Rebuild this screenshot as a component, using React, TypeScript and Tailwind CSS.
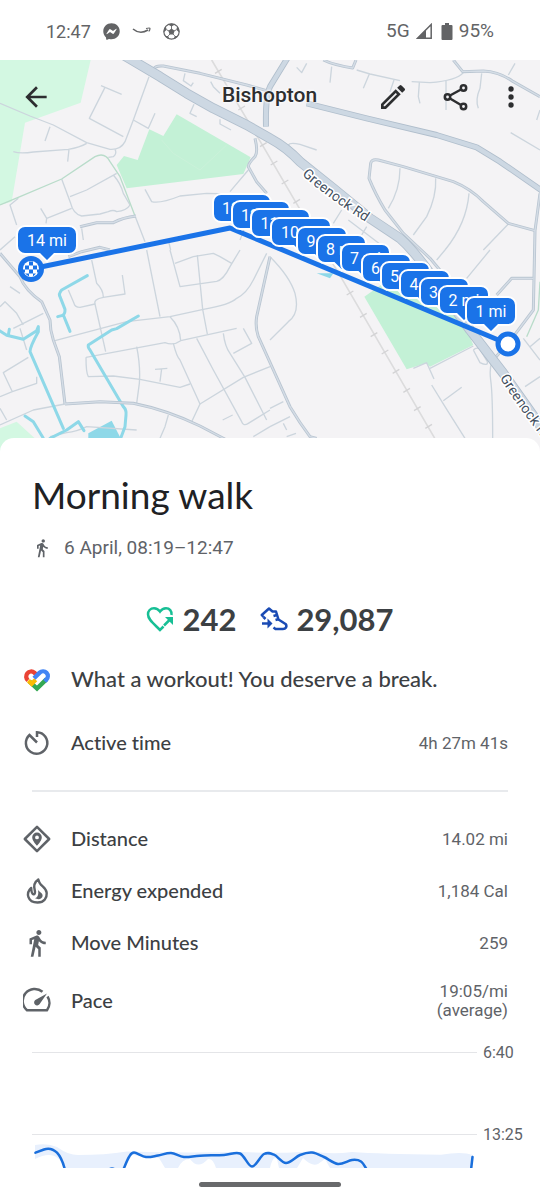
import type { ReactNode } from "react";
import { MdArrowBack, MdDirectionsWalk, MdOutlineModeEdit } from "react-icons/md";
import { FaFacebookMessenger } from "react-icons/fa";

// left/top of every mile label, the last one is drawn on top
const mileLabels = [
  { text: "14 mi", x: 18, y: 167, w: 58 },
  { text: "13 mi", x: 214, y: 135, w: 56 },
  { text: "12 mi", x: 233, y: 142, w: 56 },
  { text: "11 mi", x: 252, y: 150, w: 57 },
  { text: "10 mi", x: 272, y: 159, w: 58 },
  { text: "9 mi", x: 298, y: 168, w: 48 },
  { text: "8 mi", x: 318, y: 176, w: 47 },
  { text: "7 mi", x: 342, y: 185, w: 47 },
  { text: "6 mi", x: 363, y: 195, w: 47 },
  { text: "5 mi", x: 382, y: 203, w: 47 },
  { text: "4 mi", x: 401, y: 211, w: 48 },
  { text: "3 mi", x: 421, y: 219, w: 47 },
  { text: "2 mi", x: 440, y: 227, w: 48 },
  { text: "1 mi", x: 467, y: 238, w: 48 },
];

const lanes = [
  "M303 77L365 103M315 82L268 175L370 230",
  "M447 50L400 180L375 245Q362 270 330 268L260 248L160 195L90 168L0 130",
  "M400 180L445 205L465 160M150 200L135 243M40 275Q60 282 100 276L205 268Q240 262 260 250M207 268L203 305",
  "M345 268Q352 280 340 290L325 292M185 357L212 430Q220 462 245 468L300 462L325 455Q340 448 350 455Q380 452 390 435",
  "M210 410L260 390L350 340M340 345Q362 370 370 400L390 435M50 495L30 435L55 415M122 445L140 475L215 445M140 475L138 490",
  "M0 570L45 530M245 505L250 540M405 468L435 545M435 388L455 425Q480 432 540 408L620 400L690 402",
  "M555 40L550 62L573 78L580 68M582 133L570 160L590 170M660 178L660 192L693 210M632 65L640 80L660 100",
  "M690 395L745 330M1070 30L1110 42L1200 62M995 20L990 68M1108 42L1090 85M1182 60L1170 95M890 22L905 38L920 10",
  "M1235 65L1290 68Q1370 62 1390 38M1258 68L1255 110L1260 130M1338 60L1338 150M1445 40L1440 85Q1425 120 1435 145",
  "M1545 10L1525 45M1620 150L1610 180M1532 218L1620 270M865 255Q870 246 900 253L950 270M1025 450L1000 490M1045 480L1170 575M1100 500L1085 525",
  "M1200 325Q1200 390 1165 445M1307 355Q1310 410 1280 470L1240 525M1407 400Q1400 490 1335 570M1525 492L1450 570",
  "M440 570L480 770M510 570L540 680L650 664Q670 660 690 620L720 570M525 610L580 590L640 580L660 590L695 610M592 585L608 748L622 822",
  "M165 842L380 785L510 770L610 748Q690 735 710 715Q740 700 760 660L800 580M505 540L512 570M720 540L735 500",
  "M275 600L290 670Q310 690 310 712L375 702L367 645M310 712Q280 718 285 732L240 742Q225 742 222 730L205 690M285 732L317 875",
  "M510 770Q540 800 542 842M258 892L495 848Q520 858 542 842L710 805M258 892Q258 940 265 950L340 948L420 958L540 982L570 972",
  "M410 860Q422 920 418 970L410 1030M590 835L640 930L725 1085Q730 1100 745 1090L810 1050M520 850Q530 890 540 900L600 1032L575 1085",
  "M600 1032L730 952L810 920M670 820Q675 860 690 880L735 952L800 1080M730 805L755 850L700 880M465 928L502 925M485 926L480 965",
  "M668 1080L698 1065M505 1065L495 1100L480 1135M760 1130L810 1100M0 740L15 725L50 760L70 795M40 805L130 760",
  "M60 805L80 870M85 892L10 938L37 995L110 970V950M0 1010L37 995M0 1095L100 1050L195 1032M0 1045L20 1080M150 1130L200 1118Q230 1115 260 1100L410 1110",
  "M30 680L60 700M810 590Q870 650 885 700Q900 760 865 785L810 840M810 1045L850 1025M810 1100L870 1070M850 1090L860 1110M860 1130L888 1120",
  "M1240 925L1280 908L1302 957M1295 975L1335 1040L1395 1135M1330 1022L1385 982M1290 925L1420 858M1420 870L1440 908Q1465 920 1462 905L1440 868Q1430 860 1420 870",
  "M1490 890Q1465 905 1472 960Q1478 1000 1478 1135M1570 835L1620 900M1575 980L1620 950M1590 860L1620 835M1400 655L1470 570M1335 570L1310 600",
];

const streets = [
  "M460 28Q465 16 490 18L600 40L740 75L800 92",
  "M970 0Q1000 15 1058 24L1068 0",
  "M1360 0L1388 35L1450 33Q1500 36 1540 65L1620 110",
  "M1605 512L1525 490L1450 425Q1410 385 1360 365L1210 320L1135 300Q1115 296 1112 310L1107 355Q1125 400 1155 450L1210 520L1290 595L1370 690",
  "M1620 400L1605 512L1600 750L1540 830L1480 900",
  "M1490 705L1535 655H1600",
  "M765 235Q775 275 765 290Q745 310 745 320L770 365L800 400",
  "M240 500L290 488L340 488Q370 472 408 468",
  "M0 580L60 650Q75 690 125 725L150 780Q150 810 160 840L178 890L195 1032",
  "M195 1032L300 1025L400 1030Q500 1050 600 1098L680 1140",
  "M810 590L770 770Q765 800 775 830L870 1040Q900 1090 930 1130L950 1135",
  "M205 590L245 575L300 562L330 570",
];

const greenockRd = "M370 -15L480 50L560 100L640 145L740 195L810 235Q860 262 900 305L1000 385L1110 475L1200 535Q1240 570 1290 640L1410 810L1510 940L1630 1110";
const highRd = "M920 130L1100 175L1310 225L1430 262L1500 305L1630 395";
const stationRd = "M862 -5L810 80Q796 110 798 200";

const streams = [
  "M262 647L185 690Q175 702 180 710L195 748Q196 764 185 767L173 770M190 765L210 814",
  "M415 768L350 806L335 810L265 855Q263 862 270 870L370 1040Q380 1050 378 1065L375 1100L362 1135",
  "M-5 810L20 826L70 838L110 812L115 800V815Q90 860 90 875L190 1105M25 825L28 808",
  "M150 1135L200 1110L235 1085L252 1112M75 1068L100 1085L130 1135",
];

function MapView() {
  return (
    <svg viewBox="0 0 540 392" className="block w-full bg-[#f4f3f5]" role="img" aria-label="Route map">
      <svg viewBox="0 0 1620 1176" width="540" height="392" fill="none" strokeLinejoin="round">
        <path d="M0 0H272L242 128L75 188L35 425L0 435Z" fill="#d3f8e2" />
        <path d="M0 1105L50 1085L110 1140V1176H0Z" fill="#d3f8e2" />
        <path d="M530 163L752 292L730 342L380 385L350 315L372 288L413 300L448 208L490 228Z" fill="#c3f1d6" />
        <path d="M485 240L520 280L600 330L680 255" stroke="#cbf2da" strokeWidth="3" />
        <path d="M1093 710L1150 670L1370 740L1420 855L1290 920L1278 910L1220 928Z" fill="#c3f1d6" />
        <path d="M265 1120L335 1082L362 1135V1150H265Z" fill="#8ed8e8" />
        <path d="M950 640L1000 640L990 655Z" fill="#8ed8e8" />
        {/* railway */}
        <path d="M635 0L700 110L790 260L895 440L1025 655L1310 1145" stroke="#dcdcdd" strokeWidth="5" />
        <path
          d="M645 40l20-12M715 150l20-12M780 260l20-12M812 315l20-12M845 372l20-12M880 430l20-12M1040 705l20-12M1080 772l20-12M1112 830l20-12M1145 882l20-12M1178 940l20-12M1210 997l20-12M1242 1052l20-12M1276 1105l20-12"
          stroke="#d3d3d5"
          strokeWidth="4"
        />
        {lanes.map((d) => (
          <path key={d} d={d} stroke="#ccd5dd" strokeWidth="4" />
        ))}
        <path d="M0 435L60 410L185 357L285 290Q315 275 330 305L360 350L405 468M1580 830L1615 750L1620 665" stroke="#b9dcca" strokeWidth="4" />
        {streams.map((d) => (
          <path key={d} d={d} stroke="#8ed8e8" strokeWidth="9" strokeLinecap="round" />
        ))}
        {streets.map((d) => (
          <path key={d} d={d} stroke="#b9c5d1" strokeWidth="9" />
        ))}
        {streets.map((d) => (
          <path key={d} d={d} stroke="#d5dde6" strokeWidth="4" />
        ))}
        <path d={stationRd} stroke="#b0becc" strokeWidth="18" />
        <path d={highRd} stroke="#b0becc" strokeWidth="18" />
        <path d={greenockRd} stroke="#b0becc" strokeWidth="30" />
        <path d={stationRd} stroke="#cdd8e3" strokeWidth="13" />
        <path d={highRd} stroke="#cdd8e3" strokeWidth="13" />
        <path d={greenockRd} stroke="#cdd8e3" strokeWidth="25" />
      </svg>

      <path id="rd-north" d="M302 115Q328 139 380 171" fill="none" />
      <path id="rd-south" d="M500 318Q514 342 550 388" fill="none" />
      <g className="fill-[#43505f] stroke-white font-[Roboto,sans-serif] text-[14px] [paint-order:stroke]" strokeWidth="3">
        <text><textPath href="#rd-north">Greenock Rd</textPath></text>
        <text><textPath href="#rd-south">Greenock Rd</textPath></text>
      </g>

      <path d="M31 209L230 168L508 284" fill="none" stroke="#1a73e8" strokeWidth="5" strokeLinejoin="round" />
      <circle cx="31" cy="209" r="13" fill="#1a73e8" />
      <circle cx="31" cy="209" r="8" fill="#fff" />
      <path d="M29 201.500h4v4h-4zM25 205.500h4v4h-4zM33 205.500h4v4h-4zM29 209.500h4v4h-4zM33 213.500h3l-3 3zM29 213.500h-4l4 3zM37 209.500h2v3h-2zM23 209.500h2v3h-2z" fill="#1a73e8" />
      <circle cx="508" cy="284" r="10" fill="#fff" stroke="#1a73e8" strokeWidth="5" />
      {mileLabels.map(({ text, x, y, w }) => (
        <g key={text}>
          <path
            d={`M${x + 7} ${y}h${w - 14}a7 7 0 0 1 7 7v12a7 7 0 0 1-7 7h${-(w / 2 - 14)}l-7 7l-7-7h${-(w / 2 - 14)}a7 7 0 0 1-7-7v-12a7 7 0 0 1 7-7z`}
            fill="#1a73e8"
            stroke="#fff"
            strokeWidth="4"
            className="[paint-order:stroke]"
          />
          <text x={x + w / 2} y={y + 19} textAnchor="middle" className="fill-white font-[Roboto,sans-serif] text-[16px]">{text}</text>
        </g>
      ))}
    </svg>
  );
}

function StatusBar() {
  return (
    <div className="flex h-[60px] items-center justify-between bg-white px-[46px] pt-0.5 font-[Roboto,sans-serif] text-[18px] text-[#636466]">
      <div className="flex items-center gap-3">
        <span>12:47</span>
        <FaFacebookMessenger size={17} />
        <svg width="19" height="8" viewBox="0 0 19 8" fill="none" stroke="currentColor">
          <path d="M1 2Q8 8 16 3" strokeWidth="1.600" />
          <path d="M14 1.500Q18 .5 18 1.500Q18 3 16.800 4.500" strokeWidth="1.200" />
        </svg>
        <svg width="17" height="17" viewBox="0 0 17 17" fill="currentColor">
          <circle cx="8.500" cy="8.500" r="7.700" fill="none" stroke="currentColor" strokeWidth="1.200" />
          <path d="M8.500 5.500L11.600 7.800L10.400 11.400H6.600L5.400 7.800Z" />
          <path d="M5 1.500L8.500 3.500L12 1.500L8.500 .5ZM14.200 3.200L13.300 6.800L16.300 9.500L16 6ZM2.800 3.200L3.700 6.800L.7 9.500L1 6ZM15 13L11.800 12.900L10.500 16.200L13 15.200ZM2 13L5.200 12.900L6.500 16.200L4 15.200Z" />
          <path d="M8.500 3V6M13.300 6.800L11 8M3.700 6.800L6 8M11.800 12.900L10 11M5.200 12.900L7 11" fill="none" stroke="currentColor" strokeWidth=".9" />
        </svg>
      </div>
      <div className="flex items-center gap-1.5 text-[19px]">
        <span>5G</span>
        <svg width="16" height="16" viewBox="0 0 16 16">
          <path d="M15.200 1.500V15.200H1.500Z" fill="none" stroke="currentColor" strokeWidth="1.500" />
          <path d="M1 15.500L10 6.500V15.500Z" fill="currentColor" />
        </svg>
        <svg width="15" height="17" viewBox="-3 0 14 17" fill="currentColor">
          <path d="M3.500 0h4v2H10a1 1 0 0 1 1 1v13a1 1 0 0 1-1 1H1a1 1 0 0 1-1-1V3a1 1 0 0 1 1-1h2.500z" />
        </svg>
        <span>95%</span>
      </div>
    </div>
  );
}

function TopBar() {
  return (
    <header className="absolute inset-x-0 top-0 grid h-[74px] grid-cols-[1fr_auto_1fr] items-center pl-5 pr-[21px] text-[#2d2e30]">
      <button aria-label="Back" className="justify-self-start"><MdArrowBack size={32} /></button>
      <h1 className="pb-0.5 font-[Roboto,sans-serif] text-[21px] font-medium [text-shadow:0_0_3px_white,0_0_3px_white]">Bishopton</h1>
      <div className="flex items-center gap-[31px] justify-self-end">
        <button aria-label="Edit"><MdOutlineModeEdit size={32} /></button>
        <button aria-label="Share">
          <svg width="32" height="32" viewBox="0 0 32 32" fill="none" stroke="currentColor" strokeWidth="2.500">
            <circle cx="7.500" cy="16" r="2.700" />
            <circle cx="23.500" cy="7" r="2.700" />
            <circle cx="23.500" cy="25.500" r="2.700" />
            <path d="M10 14.500L21 8.500M10 17.500L21 24" />
          </svg>
        </button>
        <button aria-label="More options">
          <svg width="16" height="32" viewBox="0 0 16 32" fill="currentColor">
            <circle cx="8" cy="8" r="2.700" />
            <circle cx="8" cy="16" r="2.700" />
            <circle cx="8" cy="24" r="2.700" />
          </svg>
        </button>
      </div>
    </header>
  );
}

const HeartPointsIcon = () => (
  <svg width="28" height="26" viewBox="0 0 28 26" fill="none" stroke="#17bf95" strokeWidth="2.500">
    <path d="M25.500 9C26 5 23.500 2.200 20 2.200C17.500 2.200 15.500 3.400 14 5.500C12.500 3.400 10.500 2.200 8 2.200C4.300 2.200 2 5 2 8.200C2 13.500 7 17 14 24L17.500 20.500" />
    <path d="M18 19.500L25 12.500" />
    <path d="M19 11H27V19Z" fill="#17bf95" stroke="none" />
  </svg>
);

const StepsIcon = () => (
  <svg width="28" height="26" viewBox="0 0 28 26" fill="none" stroke="#1a4bb4" strokeWidth="2.500" strokeLinejoin="round">
    <path d="M3.500 11L1.800 9L9 2.500L12.500 5.500H16L18.500 13.500L25.500 18Q27 19.500 26 21.500Q25 23 23 23H15.500L13.500 21.500" />
    <path d="M13.500 10L17 9M15.500 14L19 13M3.500 11L5.500 13" />
    <path d="M2 17.500H10" />
    <path d="M7.500 12.500L12.500 17.500L7.500 22.500Z" fill="#1a4bb4" stroke="none" />
  </svg>
);

const FitIcon = () => (
  <svg width="28" height="28" viewBox="68 48 84 84" fill="none" strokeWidth="13">
    <path d="M83 91A14 14 0 0 1 102 68L110 76" stroke="#ea4335" />
    <path d="M87 94L110 115.500L138 88" stroke="#34a853" />
    <path d="M84 92L94 101L106 89" stroke="#fbbc04" />
    <path d="M101 85L118 68A14 14 0 0 1 138 89L133 94" stroke="#4285f4" />
  </svg>
);

const ActiveTimeIcon = () => (
  <svg width="28" height="28" viewBox="0 0 28 28" fill="none" stroke="currentColor" strokeWidth="2.500">
    <path d="M14 8V3.300A10.700 10.700 0 1 1 6.500 6L14 13.500" />
  </svg>
);

const DistanceIcon = () => (
  <svg width="28" height="28" viewBox="0 0 28 28">
    <path d="M14 1.800L26.200 14L14 26.200L1.800 14Z" fill="none" stroke="currentColor" strokeWidth="2.500" strokeLinejoin="round" />
    <path fillRule="evenodd" d="M14 7.500a4.800 4.800 0 0 0-4.800 4.800C9.200 16 14 20.800 14 20.800S18.800 16 18.800 12.300A4.800 4.800 0 0 0 14 7.500zm0 3a1.900 1.900 0 1 1 0 3.800a1.900 1.900 0 0 1 0-3.800z" fill="currentColor" />
  </svg>
);

const EnergyIcon = () => (
  <svg width="28" height="28" viewBox="0 0 28 28">
    <path
      d="M15.300 2.500C11.500 5 10.500 9 11.800 13.500C12.500 16 11.500 17.500 10.300 17.300C8.800 17 8.400 15 8.200 11C2.500 16 4.500 25.500 14.500 25.500C21.500 25.500 24 20.500 23.700 16C23.400 11.500 20 10 18 7.800C16.500 6.300 15.800 4.500 15.300 2.500Z"
      fill="none"
      stroke="currentColor"
      strokeWidth="2.400"
      strokeLinejoin="round"
    />
    <path d="M14.800 12C15 14.800 20 15.500 19.600 19C19.200 22 15.500 23 12 21.300C15.500 20 15.800 16.500 14.800 12Z" fill="currentColor" />
  </svg>
);

const PaceIcon = () => (
  <svg width="28" height="28" viewBox="0 0 28 28">
    <path d="M19.500 4.700A12 12 0 0 0 4 23.200H24A12 12 0 0 0 24.500 9.500" fill="none" stroke="currentColor" strokeWidth="2.500" strokeLinejoin="round" />
    <path d="M24 6.500L16.500 17.200A3 3 0 1 1 12.300 13Z" fill="currentColor" />
  </svg>
);

function MetricRow({ icon, label, value, height }: { icon: ReactNode; label: string; value: ReactNode; height: string }) {
  return (
    <div className={`flex items-center gap-5 pl-[23px] pr-8 ${height}`}>
      <span className="flex w-7 shrink-0 justify-center text-[#5f6368]">{icon}</span>
      <dt className="grow pb-0.5 text-[20px] font-medium text-[#3c4043]">{label}</dt>
      <dd className="text-right font-[Roboto,sans-serif] text-[17px] leading-[19px] text-[#5f6368]">{value}</dd>
    </div>
  );
}

const paceLine: number[][] = [
  [124, 135], [129, 124], [134, 119.500], [146, 124], [158, 122.500], [171, 120], [184, 124], [200, 122.700], [224, 122], [240, 120.500],
  [252, 133.500], [264, 121], [274, 121.700], [286, 130], [300, 122], [312, 119.500], [324, 124], [338, 131], [352, 127], [361, 128.500], [367, 137],
];

const smooth = (pts: number[][]) =>
  pts.reduce((d, [x, y], i) => {
    if (i === 0) return `M${x} ${y}`;
    const p0 = pts[i - 2] ?? pts[i - 1];
    const p1 = pts[i - 1];
    const p3 = pts[i + 1] ?? pts[i];
    return `${d}C${p1[0] + (x - p0[0]) / 6} ${p1[1] + (y - p0[1]) / 6} ${x - (p3[0] - p1[0]) / 6} ${y - (p3[1] - p1[1]) / 6} ${x} ${y}`;
  }, "");

function PaceChart() {
  return (
    <svg viewBox="0 0 540 135" className="block w-full" role="img" aria-label="Pace chart">
      <path d="M32 19.500H477M32 101.500H477" stroke="#e4e5e8" />
      <path
        d="M35 112Q48 110 57 114Q68 122 78 122Q105 122 127 118.500Q180 120 241 119Q290 121 312 118Q330 122 352 119Q380 121 441 121.700Q462 118 473 122L471 135H330L325 126L318 131Q312 134 303 125L297 135H279L277 126Q273 122 270 135H216Q213 125 208 126Q198 137 190 126Q182 126 178 135H165L159 125L132 122L124 135H64Q57 115 35 126Z"
        fill="#e8f0fd"
      />
      <g fill="none" stroke="#1a6fdc" strokeWidth="2.500" strokeLinecap="round">
        <path d="M35.500 119.700L44 116.500Q51 114 57 119.700Q62 125 65 137M109 136.500Q112 134.500 115 136.500M472.500 124L471 137" />
        <path d={smooth(paceLine)} />
      </g>
      <g className="fill-[#5f6368] font-[Roboto,sans-serif] text-[16px]">
        <text x="483" y="25">6:40</text>
        <text x="483" y="107">13:25</text>
      </g>
    </svg>
  );
}

export default function App() {
  return (
    <div className="min-h-screen bg-white font-[Lato,sans-serif] [font-variant-ligatures:none]">
      <StatusBar />
      <div className="relative">
        <MapView />
        <TopBar />
      </div>

      <main className="relative -mt-3.5 rounded-t-[14px] bg-white pt-[34px]">
        <h2 className="px-8 text-[37px] leading-[46px] text-[#202124]">Morning walk</h2>
        <p className="mt-[18px] flex h-6 items-center gap-3 px-8 font-[Roboto,sans-serif] text-[19px] text-[#5f6368]">
          <MdDirectionsWalk size={20} />6 April, 08:19–12:47
        </p>

        <div className="mt-10 flex h-10 items-center justify-center gap-6 pb-0.5 text-[31px] font-bold text-[#3c4043]">
          <span className="flex items-center gap-2"><HeartPointsIcon />242</span>
          <span className="flex items-center gap-2"><StepsIcon />29,087</span>
        </div>

        <p className="mt-4 flex h-12 items-center gap-5 pl-[23px] pr-8 text-[22px] font-medium text-[#3c4043]">
          <FitIcon /><span className="pb-1">What a workout! You deserve a break.</span>
        </p>

        <dl>
          <MetricRow icon={<ActiveTimeIcon />} label="Active time" value="4h 27m 41s" height="h-[78px]" />
        </dl>
        <hr className="mx-8 mb-[21px] mt-2 border-t-2 border-[#e8eaed]" />
        <dl>
          <MetricRow icon={<DistanceIcon />} label="Distance" value="14.02 mi" height="h-[52px]" />
          <MetricRow icon={<EnergyIcon />} label="Energy expended" value="1,184 Cal" height="h-[52px]" />
          <MetricRow icon={<MdDirectionsWalk size={30} className="shrink-0" />} label="Move Minutes" value="259" height="h-[52px]" />
          <MetricRow icon={<PaceIcon />} label="Pace" value={<>19:05/mi<br />(average)</>} height="h-16" />
        </dl>
        <PaceChart />
      </main>

      <div className="flex h-8 items-center justify-center">
        <div className="h-[5px] w-[142px] rounded-full bg-[#68696b]" />
      </div>
    </div>
  );
}
